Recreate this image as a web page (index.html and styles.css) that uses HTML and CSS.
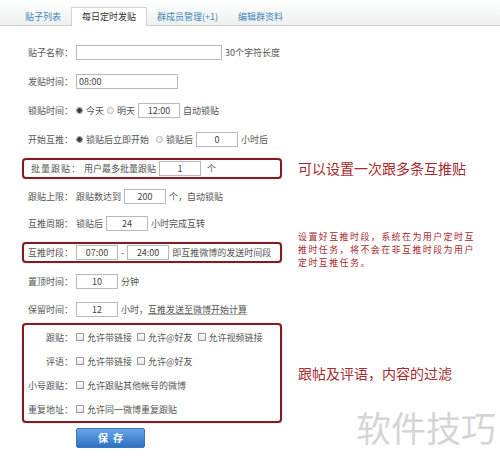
FILE: index.html
```html
<!DOCTYPE html>
<html lang="zh-CN">
<head>
<meta charset="utf-8">
<title>每日定时发贴</title>
<link rel="stylesheet" href="styles.css">
</head>
<body>
<nav class="tabs">
  <span class="tab">贴子列表</span>
  <span class="tab tab--active">每日定时发贴</span>
  <span class="tab">群成员管理(+1)</span>
  <span class="tab">编辑群资料</span>
</nav>

<div class="main">
  <div class="line h29">
    <div class="field"><span class="label">贴子名称：</span><input class="input input--name" value=""><span class="text">30个字符长度</span></div>
  </div>
  <div class="line h29">
    <div class="field"><span class="label">发贴时间：</span><input class="input input--time" value="08:00"></div>
  </div>
  <div class="line h29">
    <div class="field"><span class="label">锁贴时间：</span><span class="opt"><span class="radio radio--on"></span>今天</span><span class="opt"><span class="radio"></span>明天</span><input class="input" value="12:00"><span class="text">自动锁贴</span></div>
  </div>
  <div class="line h29">
    <div class="field"><span class="label">开始互推：</span><span class="opt"><span class="radio radio--on"></span>锁贴后立即开始</span><span class="opt opt--sp"><span class="radio"></span>锁贴后</span><input class="input" value="0"><span class="text">小时后</span></div>
  </div>
  <div class="line h28">
    <div class="field field--box field--short"><span class="label label--wide">批量跟贴：</span><span class="text">用户最多批量跟贴</span><input class="input" value="1"><span class="text gap-l">个</span></div>
    <p class="note note--big">可以设置一次跟多条互推贴</p>
  </div>
  <div class="line h28">
    <div class="field"><span class="label">跟贴上限：</span><span class="text">跟贴数达到</span><input class="input" value="200"><span class="text">个，自动锁贴</span></div>
  </div>
  <div class="line h27">
    <div class="field"><span class="label">互推周期：</span><span class="text">锁贴后</span><input class="input" value="24"><span class="text">小时完成互转</span></div>
  </div>
  <div class="line h31">
    <div class="field field--box field--short"><span class="label">互推时段：</span><input class="input" value="07:00"><span class="text">-</span><input class="input" value="24:00"><span class="text">即互推微博的发送时间段</span></div>
    <p class="note note--small"><span class="nl">设置好互推时段，系统在为用户定时互</span><span class="nl">推时任务，将不会在非互推时段为用户</span><span class="nl">定时互推任务。</span></p>
  </div>
  <div class="line h27">
    <div class="field"><span class="label">置顶时间：</span><input class="input" value="10"><span class="text">分钟</span></div>
  </div>
  <div class="line h28">
    <div class="field"><span class="label">保留时间：</span><input class="input" value="12"><span class="text">小时，<span class="u">互推发送至微博开始计算</span></span></div>
  </div>
  <div class="line">
    <div class="field field--box field--stack">
      <div class="subrow"><span class="label">跟贴：</span><span class="opt"><span class="check"></span>允许带链接</span><span class="opt"><span class="check"></span>允许@好友</span><span class="opt"><span class="check"></span>允许视频链接</span></div>
      <div class="subrow"><span class="label">评语：</span><span class="opt"><span class="check"></span>允许带链接</span><span class="opt"><span class="check"></span>允许@好友</span></div>
      <div class="subrow"><span class="label">小号跟贴：</span><span class="opt"><span class="check"></span>允许跟贴其他帐号的微博</span></div>
      <div class="subrow"><span class="label">重复地址：</span><span class="opt"><span class="check"></span>允许同一微博重复跟贴</span></div>
    </div>
    <p class="note note--big">跟帖及评语，内容的过滤</p>
  </div>
  <div class="actions">
    <button class="btn" type="button">保存</button>
  </div>
</div>

<div class="watermark">软件技巧</div>
</body>
</html>
```

FILE: styles.css
```css
* { box-sizing: border-box; }

html, body {
  margin: 0;
  padding: 0;
  background: #fff;
}

body {
  width: 500px;
  height: 466px;
  overflow: hidden;
  position: relative;
  font-family: "Noto Sans CJK SC", "Liberation Sans", sans-serif;
  font-size: 9px;
  color: #555;
}

/* tabs */
.tabs {
  height: 26px;
  display: flex;
  align-items: flex-end;
  padding-left: 15px;
  background: linear-gradient(#ffffff, #eef0f0);
  border-bottom: 1px solid #cfcfcf;
}

.tab {
  height: 18px;
  line-height: 17px;
  padding: 1px 10px 0;
  color: #3f86b8;
  white-space: nowrap;
}

.tab--active {
  height: 19px;
  margin-bottom: -1px;
  padding-top: 0;
  background: #fff;
  border: 1px solid #d2d2d2;
  border-bottom: none;
  color: #333;
}

/* form */
.main {
  padding: 12px 0 0 22px;
}

.line {
  display: flex;
  align-items: center;
}

.h27 { height: 27px; }
.h28 { height: 28px; }
.h29 { height: 29px; }
.h31 { height: 31px; }

.field {
  width: 260px;
  flex: none;
  display: flex;
  align-items: center;
  gap: 3px;
  border: 2px solid transparent;
  border-radius: 4px;
  white-space: nowrap;
}

.field--box {
  border-color: #821b22;
  box-shadow: 0 0 1px rgba(130, 27, 34, 0.6);
}

.field--short {
  height: 21px;
}

.field--stack {
  flex-direction: column;
  align-items: stretch;
  gap: 0;
}

.subrow {
  height: 24px;
  display: flex;
  align-items: center;
  gap: 5px;
}

.subrow .label {
  margin-right: -2px;
}

.label {
  width: 49px;
  flex: none;
  text-align: right;
}

.label--wide {
  width: 57px;
  letter-spacing: 1px;
}

.text { color: #555; }
.gap-l { margin-left: 3px; }

.u {
  text-decoration: underline;
  text-decoration-color: #aaa;
}

.input {
  width: 42px;
  height: 15px;
  padding: 0;
  border: 1px solid #b9b9b9;
  font: inherit;
  color: #444;
  text-align: center;
  background: #fff;
}

.input--name {
  width: 149px;
  text-align: left;
}

.input--time {
  width: 102px;
  text-align: left;
  padding-left: 2px;
}

.opt {
  display: inline-flex;
  align-items: center;
  gap: 3px;
}

.opt--sp { margin-left: 4px; }

.radio {
  width: 7px;
  height: 7px;
  border-radius: 50%;
  border: 1px solid #b5b5b5;
  background: #f2f2f2;
}

.radio--on {
  border-color: #8a8a8a;
  background: radial-gradient(circle, #3a3a3a 0 2px, #cfcfcf 2.6px);
}

.check {
  width: 8px;
  height: 8px;
  border: 1px solid #9a9a9a;
  background: linear-gradient(#ffffff, #e6e6e6);
}

/* notes */
.note {
  margin: 0 0 0 16px;
  color: #a52a30;
  white-space: nowrap;
}

.note--big {
  font-size: 14px;
  line-height: 18px;
}

.note--small {
  display: flex;
  flex-direction: column;
  font-size: 9px;
  letter-spacing: 1.4px;
  line-height: 13.1px;
  margin-top: -6px;
}

.nl {
  display: block;
  height: 13.1px;
}

/* button */
.actions {
  padding: 5px 0 0 54px;
}

.btn {
  width: 69px;
  height: 20px;
  padding: 0 0 0 5px;
  border: 1px solid #3a77c0;
  border-radius: 2px;
  background: linear-gradient(#67a7e8, #2d70c4);
  color: #fff;
  font-family: "Noto Sans CJK SC", sans-serif;
  font-size: 10px;
  font-weight: bold;
  letter-spacing: 5px;
  line-height: 18px;
}

/* watermark overlay */
.watermark {
  position: absolute;
  left: 356px;
  top: 409px;
  font-size: 35px;
  line-height: 1;
  color: #d5d5d5;
  white-space: nowrap;
}
```
